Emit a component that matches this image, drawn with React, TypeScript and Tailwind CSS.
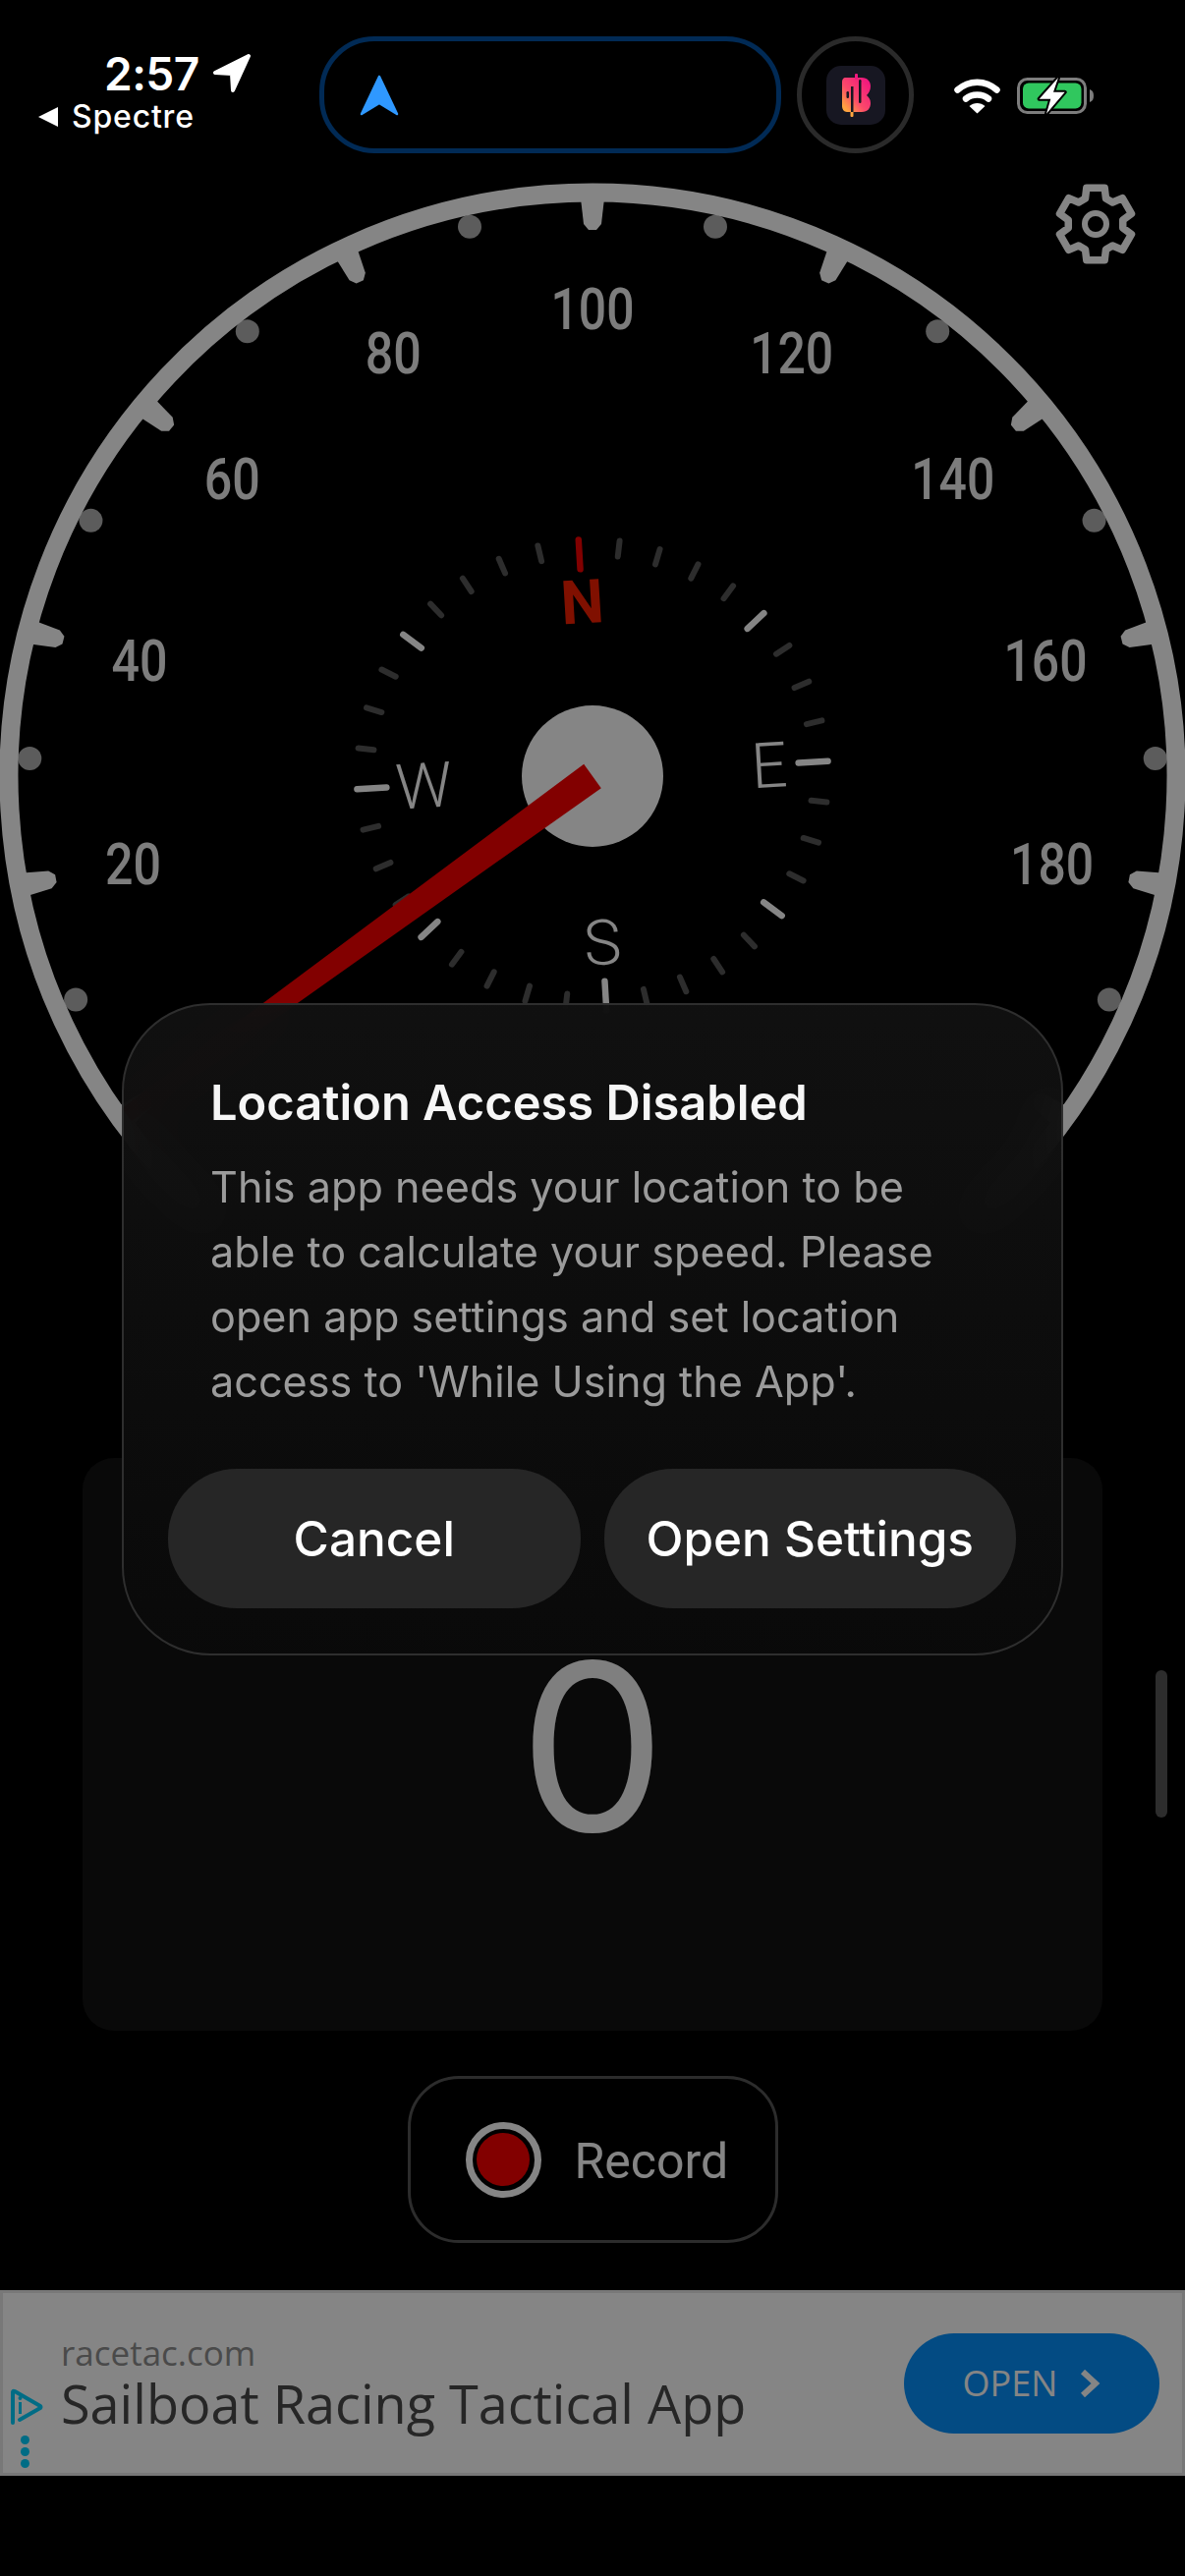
import React from "react";

const CX = 603;
const CY = 790;
const STEP = 1.26;

function polar(r: number, deg: number): [number, number] {
  const a = (deg * Math.PI) / 180;
  return [CX + r * Math.sin(a), CY - r * Math.cos(a)];
}

function Gauge() {
  const [ax, ay] = polar(594, -140);
  const [bx, by] = polar(594, 140);
  const labels = [20, 40, 60, 80, 100, 120, 140, 160, 180];
  const majors = [0, 20, 40, 60, 80, 100, 120, 140, 160, 180, 200];
  const minors = [10, 30, 50, 70, 90, 110, 130, 150, 170, 190];
  const compass = Array.from({ length: 36 }, (_, i) => i * 10);
  const bright = [50, 90, 130, 180, 230, 270, 310];
  return (
    <svg width={1206} height={1298} viewBox="0 186 1206 1298" className="block">
      {minors.map((v) => {
        const [x, y] = polar(573, (v - 100) * STEP);
        return <circle key={v} cx={x} cy={y} r={12} fill="#b0b0b0" />;
      })}
      <path d={`M ${ax} ${ay} A 594 594 0 1 1 ${bx} ${by}`} fill="none" stroke="#ffffff" strokeWidth={19} />
      {majors.map((v) => (
        <polygon
          key={v}
          points="-12,-588 12,-588 9,-562 4,-556 -4,-556 -9,-562"
          fill="#ffffff"
          transform={`translate(${CX} ${CY}) rotate(${(v - 100) * STEP})`}
        />
      ))}
      {labels.map((v) => {
        const [x, y] = polar(476, (v - 100) * STEP);
        const len = v >= 100 ? 85 : 57;
        return (
          <text
            key={v}
            x={x}
            y={y + 21}
            textAnchor="middle"
            textLength={len}
            lengthAdjust="spacingAndGlyphs"
            fontSize={60}
            fontWeight={500}
            fill="#f0f0f0"
            className="font-['Roboto',sans-serif]"
          >
            {v}
          </text>
        );
      })}
      <g transform={`translate(${CX} 789) rotate(-3.4)`}>
        {compass.map((d) => {
          const isRed = d === 0;
          const isBright = bright.includes(d);
          const cardinal = d % 90 === 0;
          const r1 = cardinal ? 210 : isBright ? 217 : 224;
          return (
            <line
              key={d}
              x1={0}
              y1={-r1}
              x2={0}
              y2={-240}
              transform={`rotate(${d})`}
              stroke={isRed ? "#f80000" : isBright ? "#ffffff" : "#565656"}
              strokeWidth={isBright || isRed ? 6.5 : 6}
              strokeLinecap="round"
            />
          );
        })}
        <text x={0} y={-155} textAnchor="middle" fontSize={62} fontWeight={700} fill="#f52000" className="font-['Roboto',sans-serif]">N</text>
        <text x={180} y={23} textAnchor="middle" fontSize={64} fontWeight={300} fill="#ffffff" className="font-['Roboto',sans-serif]">E</text>
        <text x={0} y={193} textAnchor="middle" fontSize={64} fontWeight={300} fill="#ffffff" className="font-['Roboto',sans-serif]">S</text>
        <text x={-172} y={23} textAnchor="middle" fontSize={64} fontWeight={300} fill="#ffffff" className="font-['Roboto',sans-serif]">W</text>
      </g>
      <circle cx={CX} cy={CY} r={72} fill="#ffffff" />
      <polygon points="-15,0 15,0 8,-586 -8,-586" fill="#fa0000" transform={`translate(${CX} ${CY}) rotate(-126)`} />
    </svg>
  );
}

function GearIcon() {
  const c = 43;
  const pt = (r: number, deg: number) => {
    const a = (deg * Math.PI) / 180;
    return `${(c + r * Math.sin(a)).toFixed(2)},${(c - r * Math.cos(a)).toFixed(2)}`;
  };
  const pts: string[] = [];
  for (let i = 0; i < 6; i++) {
    const a = i * 60;
    pts.push(pt(28, a - 22), pt(38, a - 14), pt(38, a + 14), pt(28, a + 22));
  }
  return (
    <svg width={86} height={86} viewBox="0 0 86 86" fill="none" stroke="#ffffff" strokeWidth={7.5} strokeLinejoin="round">
      <polygon points={pts.join(" ")} />
      <circle cx={c} cy={c} r={11} strokeWidth={6} />
    </svg>
  );
}

function StatusBar() {
  return (
    <header className="relative z-20 h-[186px] shrink-0 flex items-start">
      <div className="w-[325px] shrink-0 pt-[50px] font-['Inter',sans-serif] text-white">
        <div className="flex items-center pl-[106px] h-[50px]">
          <span className="text-[46px] leading-none font-semibold tracking-[-0.5px]">2:57</span>
          <svg width={40} height={40} viewBox="0 0 40 40" className="ml-[13px]">
            <polygon points="37,2 3,19 20,20 21,37" fill="#ffffff" stroke="#ffffff" strokeWidth={4} strokeLinejoin="round" />
          </svg>
        </div>
        <div className="flex items-center pl-[39px] h-[36px] mt-[1px]">
          <svg width={20} height={20} viewBox="0 0 20 20">
            <polygon points="20,0 20,20 0,10" fill="#ffffff" />
          </svg>
          <span className="ml-[14px] text-[32px] leading-none font-medium tracking-[0.8px]">Spectre</span>
        </div>
      </div>
      <div className="mt-[37px] w-[470px] h-[119px] rounded-[56px] border-[5px] border-[#012a55] bg-black flex items-center pl-[36px] shrink-0">
        <svg width={40} height={42} viewBox="0 0 40 42">
          <polygon points="20,2 2,40 20,29 38,40" fill="#2f98ff" stroke="#2f98ff" strokeWidth={2.5} strokeLinejoin="round" />
        </svg>
      </div>
      <div className="mt-[37px] ml-[16px] w-[119px] h-[119px] rounded-full border-[5px] border-[#2a2a2a] flex items-center justify-center shrink-0">
        <div className="w-[60px] h-[60px] rounded-[15px] bg-[#171722]">
          <svg width={60} height={60} viewBox="0 0 60 60">
            <defs>
              <linearGradient id="logo" x1="0.9" y1="0.1" x2="0.1" y2="0.9">
                <stop offset="0" stopColor="#f0187e" />
                <stop offset="0.6" stopColor="#fb4a6a" />
                <stop offset="1" stopColor="#ffa63f" />
              </linearGradient>
            </defs>
            <path d="M20 12 H36 C42 12 45 16 45 21 C45 25 43 28 41 30 C43 32 45 34 45 38 C45 43 42 47 36 47 H21 C18 47 16 44 16 41 V17 C16 14 17 12 20 12 Z" fill="url(#logo)" />
            <rect x="29" y="8" width="3" height="6" rx="1" fill="#f0187e" />
            <rect x="24.5" y="45" width="3" height="7" rx="1" fill="#ffa63f" />
            <rect x="25" y="21" width="2.5" height="26" fill="#171722" />
            <rect x="33" y="14" width="2.5" height="24" rx="1.2" fill="#171722" />
            <rect x="20.5" y="26" width="2.5" height="7" rx="1.2" fill="#171722" />
          </svg>
        </div>
      </div>
      <svg width={47} height={36} viewBox="0 0 47 36" className="mt-[80px] ml-[41px] shrink-0">
        <path d="M3.5 11.5 C15 1 32 1 43.5 11.5" fill="none" stroke="#fff" strokeWidth={6.5} strokeLinecap="round" />
        <path d="M12 20.5 C18 15 29 15 35 20.5" fill="none" stroke="#fff" strokeWidth={6.5} strokeLinecap="round" />
        <path d="M15.5 28 C20 24 27 24 31.5 28 L23.5 35.5 Z" fill="#fff" />
      </svg>
      <svg width={80} height={38} viewBox="0 0 80 38" className="mt-[79px] ml-[17px] shrink-0">
        <rect x="1.5" y="1.5" width="68" height="34" rx="9" fill="none" stroke="#7d7d7d" strokeWidth={3} />
        <rect x="6" y="5.5" width="59.5" height="26" rx="6" fill="#30c75e" />
        <path d="M74 12 C77 13 78 15 78 18.5 C78 22 77 24 74 25 Z" fill="#7d7d7d" />
        <polygon points="42,0 22.7,21.7 34.3,21.7 30,36.7 48.7,14.7 37,14.7" fill="#fff" stroke="#000" strokeWidth={4} paintOrder="stroke" strokeLinejoin="round" />
      </svg>
    </header>
  );
}

function Dialog() {
  return (
    <div className="absolute z-20 left-[124px] top-[1021px] w-[958px] h-[664px] rounded-[90px] border-2 border-[#2e2e2e] bg-gradient-to-b from-[#111111]/95 to-[#0a0a0a]/95 backdrop-blur-xl pt-[70px] pl-[88px] font-['Inter',sans-serif]">
      <h2 className="text-[48.8px] leading-[60px] font-semibold text-[#f6f6f6]">Location Access Disabled</h2>
      <p className="mt-[22px] text-[43.2px] leading-[66px] text-[#9b9b9b] w-[790px]">
        This app needs your location to be able to calculate your speed. Please open app settings and set location access to 'While Using the App'.
      </p>
      <div className="absolute left-[45px] right-[46px] top-[472px] flex gap-[24px]">
        <button className="flex-1 h-[142px] rounded-[70px] bg-[#262626] text-white text-[49.5px] font-medium">Cancel</button>
        <button className="flex-1 h-[142px] rounded-[70px] bg-[#262626] text-white text-[49.5px] font-medium">Open Settings</button>
      </div>
    </div>
  );
}

export default function App() {
  return (
    <div className="relative w-[1206px] h-[2622px] bg-black overflow-hidden flex flex-col">
      <StatusBar />
      <section className="relative h-[1298px] shrink-0">
        <Gauge />
        <div className="absolute left-[1072px] top-[-1px]">
          <GearIcon />
        </div>
      </section>
      <section className="mx-[84px] h-[583px] shrink-0 rounded-[32px] bg-[#121212] flex items-center justify-center">
        <span className="mt-[4px] text-[237px] leading-none font-[380] text-[#f4f4f4] font-['Inter',sans-serif]">0</span>
      </section>
      <button className="mt-[46px] self-center w-[377px] h-[170px] shrink-0 rounded-[52px] border-[3px] border-[#555555] flex items-center pl-[56px]">
        <span className="w-[77px] h-[77px] rounded-full border-[7px] border-white flex items-center justify-center">
          <span className="w-[54px] h-[54px] rounded-full bg-[#fa0000]" />
        </span>
        <span className="ml-[34px] mt-[3px] text-[50px] leading-none text-white font-['Roboto',sans-serif]">Record</span>
      </button>
      <aside className="mt-[48px] h-[189px] shrink-0 bg-white border-[3px] border-[#e6e6e6] flex items-stretch font-['Open_Sans',sans-serif]">
        <div className="relative w-[59px] shrink-0">
          <svg width={36} height={38} viewBox="0 0 36 38" className="absolute left-[5px] top-[97px]">
            <path d="M5 24 V4 Q5 2 7 3 L33 18 Q34 19 33 20 L12 32 M5 24 V35" fill="none" stroke="#00d0ff" strokeWidth={4} strokeLinecap="round" strokeLinejoin="round" />
            <rect x="11" y="14" width="3" height="12" fill="#00d0ff" />
            <circle cx="12.5" cy="10" r="2" fill="#00d0ff" />
          </svg>
          <div className="absolute left-[18px] top-[145px] flex flex-col gap-[3px]">
            <span className="w-[9px] h-[9px] rounded-full bg-[#00d0ff]" />
            <span className="w-[9px] h-[9px] rounded-full bg-[#00d0ff]" />
            <span className="w-[9px] h-[9px] rounded-full bg-[#00d0ff]" />
          </div>
        </div>
        <div className="flex-1 pt-[42px]">
          <div className="text-[35px] leading-[38px] text-[#8e8e8e]">racetac.com</div>
          <div className="mt-[1px] text-[54px] leading-[62px] text-[#4a4a4a]">Sailboat Racing Tactical App</div>
        </div>
        <div className="self-start mt-[41px] mr-[23px] w-[260px] h-[102px] rounded-[51px] bg-[#0690fb] flex items-center justify-center gap-[22px] text-white text-[36px]">
          OPEN
          <svg width={22} height={28} viewBox="0 0 22 28" fill="none" stroke="#fff" strokeWidth={6}>
            <path d="M4 2 L17 14 L4 26" />
          </svg>
        </div>
      </aside>
      <div className="absolute left-[1176px] top-[1700px] w-[12px] h-[150px] rounded-full bg-[#575757]" />
      <div className="absolute inset-0 z-10 bg-black/48" />
      <Dialog />
    </div>
  );
}
